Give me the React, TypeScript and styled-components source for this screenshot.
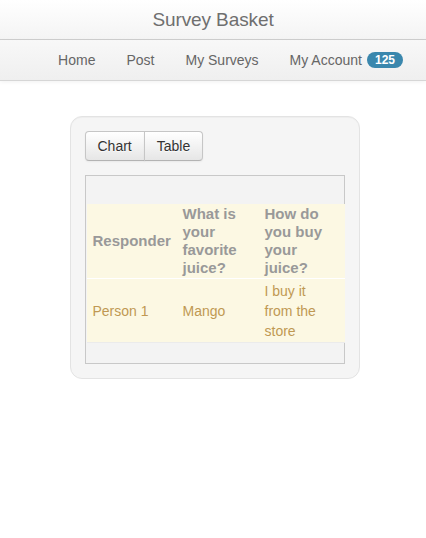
import React from "react";
import styled, { createGlobalStyle } from "styled-components";

const Global = createGlobalStyle`
  html, body { margin: 0; padding: 0; background: #fff; }
  body { font-family: "Liberation Sans", Arial, sans-serif; color: #333; }
`;

const TitleBar = styled.header`
  height: 39px;
  background: linear-gradient(#ffffff, #f4f4f4);
  border-bottom: 1px solid #cfcfcf;
  display: flex;
  align-items: center;
  justify-content: center;
`;

const Title = styled.h1`
  margin: 0;
  font-size: 19px;
  font-weight: 300;
  color: #6f6f6f;
  letter-spacing: -0.1px;
`;

const NavBar = styled.nav`
  height: 40px;
  background: linear-gradient(#f8f8f8, #efefef);
  border-bottom: 1px solid #d6d6d6;
  box-shadow: 0 1px 4px rgba(0, 0, 0, 0.06);
  display: flex;
  align-items: center;
  justify-content: flex-end;
  padding-right: 23px;
  gap: 31px;
`;

const NavLink = styled.a`
  font-size: 14px;
  color: #666;
  text-decoration: none;
  display: flex;
  align-items: center;
  gap: 5px;
`;

const Badge = styled.span`
  background: #3a87ad;
  color: #fff;
  font-weight: bold;
  font-size: 12px;
  line-height: 16px;
  padding: 0 8px;
  border-radius: 9px;
`;

const Main = styled.main`
  display: flex;
  justify-content: center;
  padding: 35px 0 0 3px;
`;

const Card = styled.section`
  width: 260px;
  padding: 14px;
  background: #f5f5f5;
  border: 1px solid #e3e3e3;
  border-radius: 12px;
  box-shadow: inset 0 1px 1px rgba(0, 0, 0, 0.03);
`;

const BtnGroup = styled.div`
  display: inline-flex;
  margin-bottom: 14px;
`;

const Btn = styled.button<{ $first?: boolean }>`
  font-family: inherit;
  font-size: 14px;
  line-height: 20px;
  padding: 4px 12px;
  color: #333;
  text-shadow: 0 1px 1px rgba(255, 255, 255, 0.75);
  background: linear-gradient(#ffffff, #e6e6e6);
  border: 1px solid #c6c6c6;
  border-bottom-color: #b3b3b3;
  box-shadow: inset 0 1px 0 rgba(255, 255, 255, 0.2), 0 1px 2px rgba(0, 0, 0, 0.05);
  margin-left: ${(p) => (p.$first ? "0" : "-1px")};
  border-radius: ${(p) => (p.$first ? "4px 0 0 4px" : "0 4px 4px 0")};
`;

const ChartBox = styled.div`
  border: 1px solid #c8c8c8;
  background: #f3f3f3;
  padding: 28px 1px 20px 1px;
`;

const Table = styled.table`
  width: 100%;
  border-collapse: collapse;
  table-layout: fixed;
  background: #fcf8e3;
  border-bottom: 1px solid #ebebeb;
`;

const Th = styled.th<{ $w: number }>`
  box-sizing: border-box;
  width: ${(p) => p.$w}px;
  text-align: left;
  font-size: 15px;
  line-height: 18px;
  font-weight: bold;
  color: #999;
  padding: 1px 8px 1px 6px;
  vertical-align: middle;
  border-bottom: 1px solid #fff;
`;

const Td = styled.td`
  box-sizing: border-box;
  font-size: 14px;
  line-height: 20px;
  color: #c09853;
  padding: 2px 8px 1px 6px;
  vertical-align: middle;
`;

export default function App() {
  return (
    <>
      <Global />
      <TitleBar>
        <Title>Survey Basket</Title>
      </TitleBar>
      <NavBar>
        <NavLink href="#">Home</NavLink>
        <NavLink href="#">Post</NavLink>
        <NavLink href="#">My Surveys</NavLink>
        <NavLink href="#">
          My Account <Badge>125</Badge>
        </NavLink>
      </NavBar>
      <Main>
        <Card>
          <BtnGroup>
            <Btn $first>Chart</Btn>
            <Btn>Table</Btn>
          </BtnGroup>
          <ChartBox>
            <Table>
              <thead>
                <tr>
                  <Th $w={90}>Responder</Th>
                  <Th $w={82}>What is your favorite juice?</Th>
                  <Th $w={86}>How do you buy your juice?</Th>
                </tr>
              </thead>
              <tbody>
                <tr>
                  <Td>Person 1</Td>
                  <Td>Mango</Td>
                  <Td>I buy it from the store</Td>
                </tr>
              </tbody>
            </Table>
          </ChartBox>
        </Card>
      </Main>
    </>
  );
}
